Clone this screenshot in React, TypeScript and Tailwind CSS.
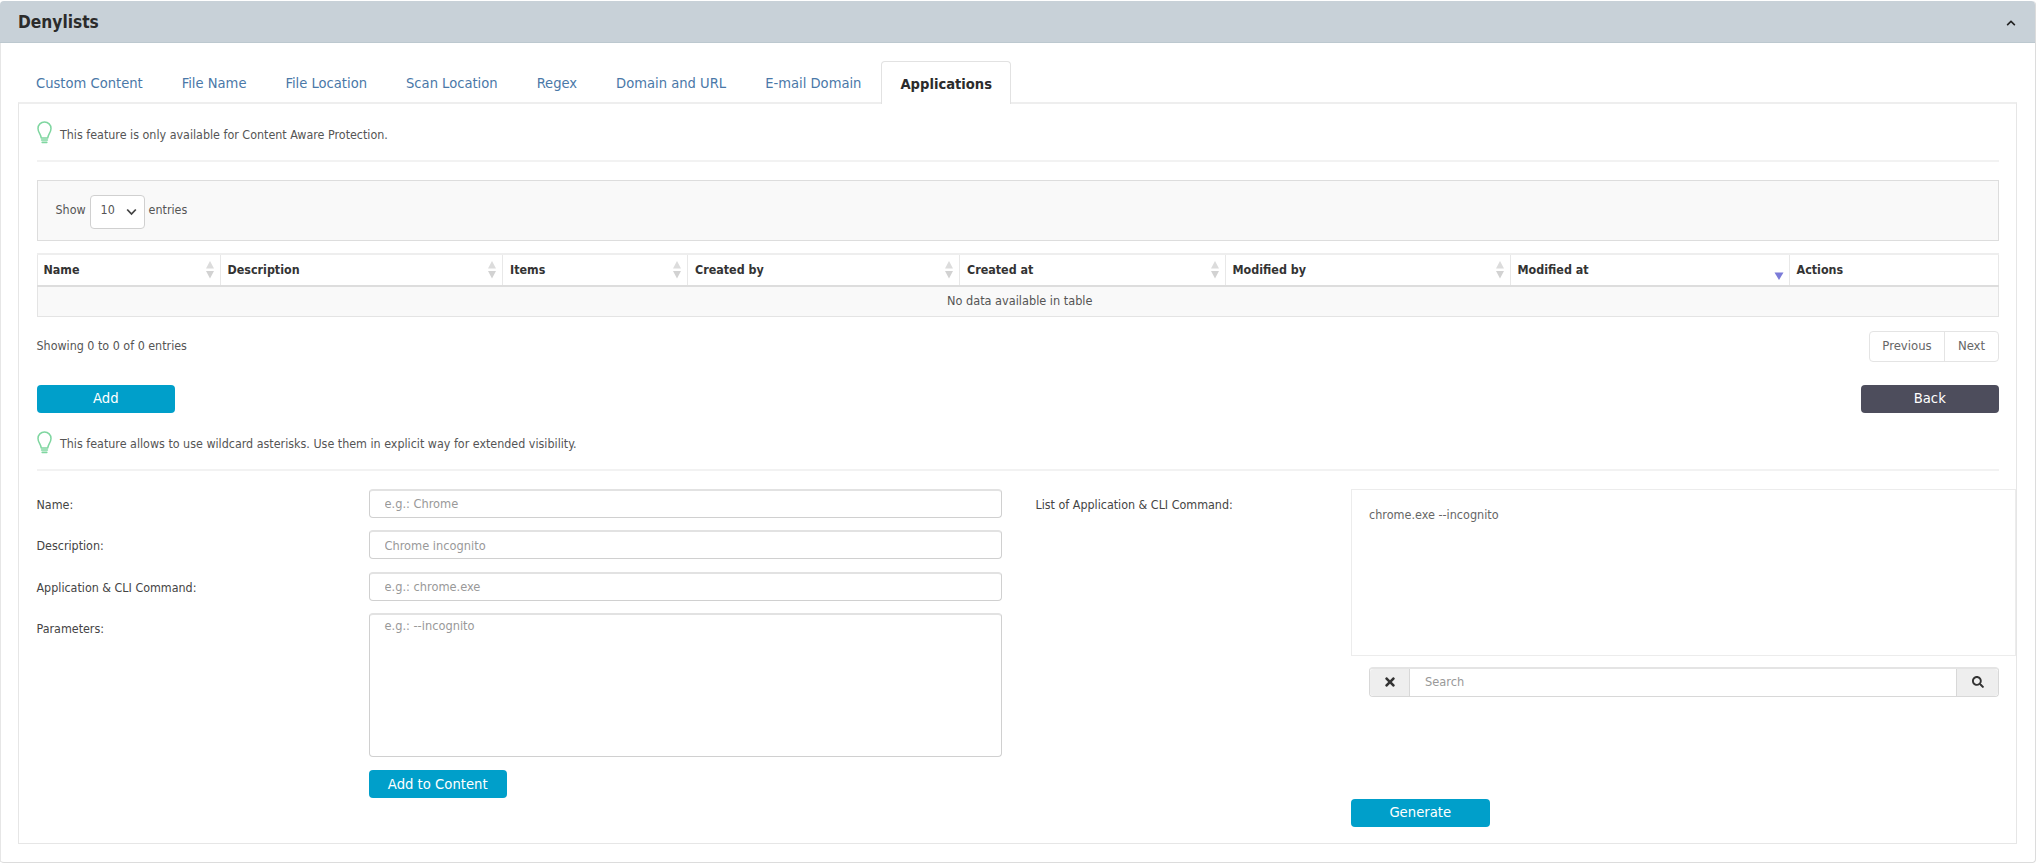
import React from "react";
import { FaChevronUp, FaSearch, FaTimes } from "react-icons/fa";

const font = "font-['DejaVu_Sans_Condensed','DejaVu_Sans',sans-serif]";

const tabs = [
  "Custom Content",
  "File Name",
  "File Location",
  "Scan Location",
  "Regex",
  "Domain and URL",
  "E-mail Domain",
];

const Bulb = () => (
  <svg width="15" height="23" viewBox="0 0 15 23" fill="none" className="shrink-0">
    <path
      d="M4.2 17C3.8 13 1 11.5 1 7.5C1 3.8 3.8 1 7.5 1C11.2 1 14 3.8 14 7.5C14 11.5 11.2 13 10.8 17Z"
      stroke="#7fd6a0"
      strokeWidth="1.5"
      strokeLinejoin="round"
    />
    <path d="M4.6 19H10.4M5.2 21.4H9.8" stroke="#7fd6a0" strokeWidth="1.6" strokeLinecap="round" />
  </svg>
);

const Hint = ({ text }: { text: string }) => (
  <div className="flex items-center gap-[8.5px] h-[23px]">
    <Bulb />
    <span className="text-[12.4px] text-[#555] mt-[5px]">{text}</span>
  </div>
);

const SortIcon = ({ active }: { active?: boolean }) =>
  active ? (
    <svg width="10" height="20" viewBox="0 0 10 20" className="shrink-0">
      <path d="M0.5 12.5H9.5L5 20Z" fill="#7b7bd8" />
    </svg>
  ) : (
    <svg width="10" height="20" viewBox="0 0 10 20" className="shrink-0">
      <path d="M1 8.5H9L5 1Z" fill="#dcdcdc" />
      <path d="M1 11H9L5 18.5Z" fill="#d2d2d2" />
    </svg>
  );

const columns = [
  { name: "Name", width: "w-[183px]" },
  { name: "Description", width: "w-[282.5px]" },
  { name: "Items", width: "w-[185px]" },
  { name: "Created by", width: "w-[272px]" },
  { name: "Created at", width: "w-[265.5px]" },
  { name: "Modified by", width: "w-[285px]" },
  { name: "Modified at", width: "w-[279px]", active: true },
  { name: "Actions", width: "", noSort: true },
];

const inputClass =
  "w-full h-[29px] rounded-[4px] border border-[#d0d0d0] border-t-2 border-t-[#e2e2e2] px-[15px] text-[12.7px] outline-none placeholder:text-[#999]";

const FormRow = ({ label, children }: { label: string; children: React.ReactNode }) => (
  <div className="flex">
    <label className="w-[332px] shrink-0 pt-[7px] text-[12.4px] text-[#444]">{label}</label>
    <div className="flex-1">{children}</div>
  </div>
);

const BlueButton = ({ text }: { text: string }) => (
  <button className="w-[138.5px] h-[28px] rounded-[4px] bg-[#009fca] text-white text-[14.7px]">{text}</button>
);

export default function App() {
  return (
    <div className={`h-[864px] bg-white pt-px ${font}`}>
      <div className="w-[2036px] h-[862px] rounded-[4px] border-r border-b border-[#dcdcdc]">
        <div className="flex items-center justify-between h-[42px] bg-[#c8d1d8] border-b border-[#bcc8cf] rounded-t-[4px] pt-[2px] pl-[18px] pr-[19px]">
          <span className="text-[17.2px] font-bold text-[#2b2b2b]">Denylists</span>
          <FaChevronUp className="text-[#222] text-[10px]" />
        </div>

        <div className="pt-[18px] pl-[17px] pr-[18px] border-l border-[#e6e6e6] h-[819px]">
          <div className="flex h-[43px] items-stretch">
            {tabs.map((tab) => (
              <div key={tab} className="flex items-center px-[18px] mr-[3px] pt-[1px] text-[14.6px] text-[#4a78a8]">
                {tab}
              </div>
            ))}
            <div className="flex items-center -ml-px px-[18px] pt-[1px] bg-white border border-b-0 border-[#e2e2e2] rounded-t-[4px] text-[14.6px] font-bold text-[#2b2b2b] relative z-10">
              Applications
            </div>
          </div>

          <div className="-mt-[2px] h-[742px] border border-[#e6e6e6] border-t-2 border-t-[#eeeeee] pl-[17.5px] pr-[17px] pt-[17px]">
            <Hint text="This feature is only available for Content Aware Protection." />
            <div className="h-[2px] bg-[#f2f2f2] mt-[16px]" />

            <div className="flex items-center h-[61px] mt-[18px] pl-[18px] bg-[#f9f9f9] border border-[#dddddd] text-[12.4px] text-[#555]">
              <span>Show</span>
              <div className="flex items-center justify-between w-[55px] h-[34px] mt-[2px] mx-[4px] pl-[10px] pr-[7px] bg-white border border-[#d0d0d0] rounded-[4px]">
                <span className="-mt-[3px]">10</span>
                <svg width="11" height="8" viewBox="0 0 11 8" fill="none">
                  <path d="M1.2 1.5L5.5 6L9.8 1.5" stroke="#444" strokeWidth="1.8" />
                </svg>
              </div>
              <span>entries</span>
            </div>

            <table className="w-full table-fixed border-collapse mt-[12px]">
              <thead>
                <tr className="h-[32px] border-t-2 border-b-2 border-t-[#eeeeee] border-b-[#dddddd]">
                  {columns.map((col, index) => (
                    <th
                      key={col.name}
                      className={`${col.width} ${
                        index === 0 ? "border-l pl-[6px]" : "pl-[7px]"
                      } pr-[5px] text-left text-[12.4px] font-bold text-[#333] border-r border-[#e8e8e8]`}
                    >
                      <div className="flex items-center justify-between">
                        <span>{col.name}</span>
                        {!col.noSort && <SortIcon active={col.active} />}
                      </div>
                    </th>
                  ))}
                </tr>
              </thead>
              <tbody>
                <tr className="h-[30px] bg-[#f9f9f9] border border-[#e4e4e4]">
                  <td colSpan={8} className="pl-[4px] text-center text-[12.6px] text-[#555]">
                    No data available in table
                  </td>
                </tr>
              </tbody>
            </table>

            <div className="flex items-center justify-between mt-[14px] h-[31px]">
              <span className="text-[12.4px] text-[#555]">Showing 0 to 0 of 0 entries</span>
              <div className="flex h-full w-[130px] border border-[#e4e4e4] rounded-[4px] text-[13px] text-[#666]">
                <div className="flex items-center justify-center w-[75px] border-r border-[#e4e4e4]">Previous</div>
                <div className="flex items-center justify-center flex-1">Next</div>
              </div>
            </div>

            <div className="flex justify-between mt-[23px]">
              <BlueButton text="Add" />
              <button className="w-[138.5px] h-[28px] rounded-[4px] bg-[#4d4d5c] text-white text-[14.7px]">Back</button>
            </div>

            <div className="mt-[18px]">
              <Hint text="This feature allows to use wildcard asterisks. Use them in explicit way for extended visibility." />
            </div>
            <div className="h-[2px] bg-[#f2f2f2] mt-[15px]" />

            <div className="flex mt-[18px]">
              <div className="w-[965px] shrink-0 flex flex-col gap-[12.5px]">
                <FormRow label="Name:">
                  <input className={inputClass} placeholder="e.g.: Chrome" />
                </FormRow>
                <FormRow label="Description:">
                  <input className={inputClass} placeholder="Chrome incognito" />
                </FormRow>
                <FormRow label="Application & CLI Command:">
                  <input className={inputClass} placeholder="e.g.: chrome.exe" />
                </FormRow>
                <FormRow label="Parameters:">
                  <textarea
                    className="block w-full h-[144px] rounded-[4px] border border-[#d0d0d0] border-t-2 border-t-[#e2e2e2] px-[15px] py-[1px] text-[12.7px] outline-none resize-none placeholder:text-[#999]"
                    placeholder="e.g.: --incognito"
                  />
                  <div className="mt-[13px]">
                    <BlueButton text="Add to Content" />
                  </div>
                </FormRow>
              </div>

              <div className="flex-1 flex ml-[34px] -mr-[17px]">
                <label className="w-[315.5px] shrink-0 pt-[7px] text-[12.4px] text-[#444]">
                  List of Application &amp; CLI Command:
                </label>
                <div className="flex-1">
                  <div className="h-[167px] border border-[#ececec] pl-[17px] pt-[16px] text-[12.5px] text-[#666]">
                    chrome.exe --incognito
                  </div>
                  <div className="flex h-[30px] mt-[11px] ml-[18px] mr-[17px] border border-[#d8d8d8] border-t-2 border-t-[#e4e4e4] rounded-[4px]">
                    <div className="flex items-center justify-center w-[40px] bg-[#eeeeee] border-r border-[#d8d8d8] rounded-l-[4px]">
                      <FaTimes className="text-[#333] text-[14px]" />
                    </div>
                    <input
                      className="flex-1 min-w-0 px-[15px] text-[12.7px] outline-none placeholder:text-[#999]"
                      placeholder="Search"
                    />
                    <div className="flex items-center justify-center w-[42px] bg-[#eeeeee] border-l border-[#d8d8d8] rounded-r-[4px]">
                      <FaSearch className="text-[#333] text-[12px]" />
                    </div>
                  </div>
                  <div className="mt-[102px]">
                    <BlueButton text="Generate" />
                  </div>
                </div>
              </div>
            </div>
          </div>
        </div>
      </div>
    </div>
  );
}
